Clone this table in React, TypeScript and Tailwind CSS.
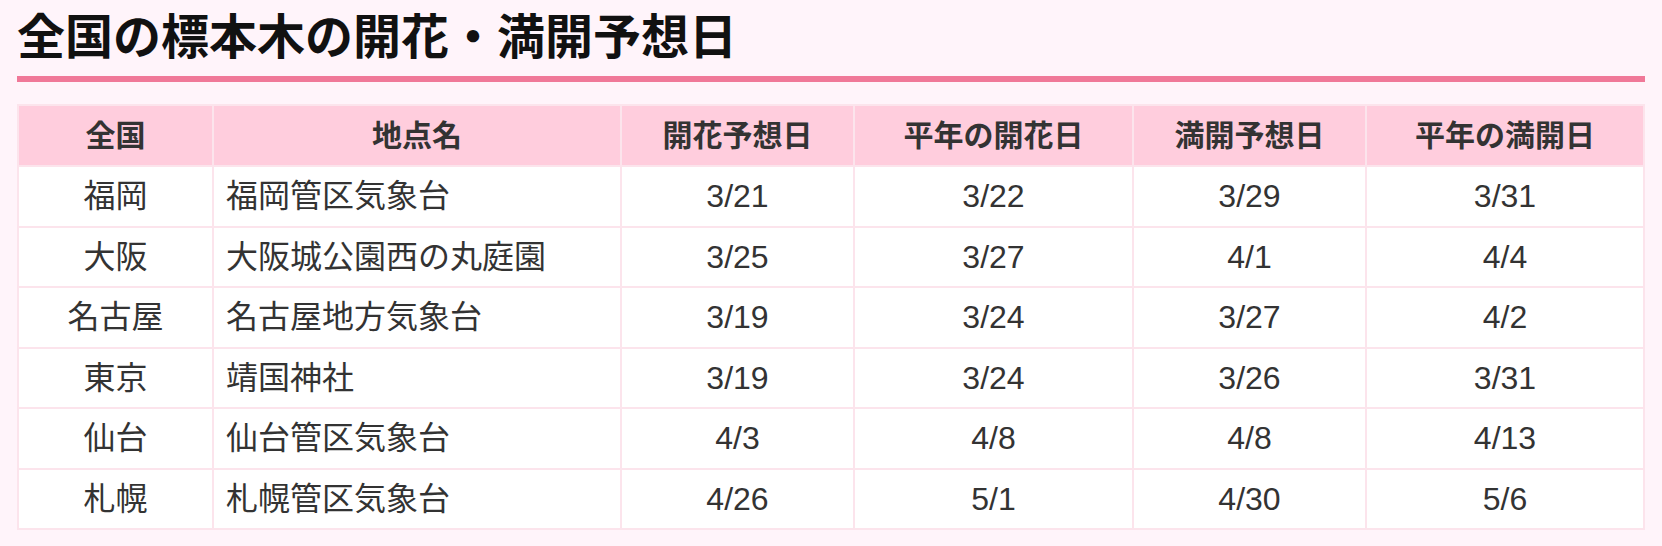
import React from 'react';

const rows = [
  { area: '福岡', place: '福岡管区気象台', bloom: '3/21', avgBloom: '3/22', full: '3/29', avgFull: '3/31' },
  { area: '大阪', place: '大阪城公園西の丸庭園', bloom: '3/25', avgBloom: '3/27', full: '4/1', avgFull: '4/4' },
  { area: '名古屋', place: '名古屋地方気象台', bloom: '3/19', avgBloom: '3/24', full: '3/27', avgFull: '4/2' },
  { area: '東京', place: '靖国神社', bloom: '3/19', avgBloom: '3/24', full: '3/26', avgFull: '3/31' },
  { area: '仙台', place: '仙台管区気象台', bloom: '4/3', avgBloom: '4/8', full: '4/8', avgFull: '4/13' },
  { area: '札幌', place: '札幌管区気象台', bloom: '4/26', avgBloom: '5/1', full: '4/30', avgFull: '5/6' },
];

export default function App() {
  return (
    <div
      className="min-h-[546px] bg-[#fff4fa] px-[17px] pt-[6px] pb-[18px]"
      style={{ fontFamily: '"Liberation Sans", "Noto Sans CJK JP", sans-serif' }}
    >
      <h2 className="border-b-[6px] border-[#f07898] pb-[6px] text-[48px] font-bold leading-[64px] text-[#111]">
        全国の標本木の開花・満開予想日
      </h2>

      <table className="mt-[22px] w-full table-fixed border-collapse border-2 border-[#fce4ec] text-[#333]">
        <colgroup>
          <col className="w-[195px]" />
          <col className="w-[408px]" />
          <col className="w-[233px]" />
          <col className="w-[279px]" />
          <col className="w-[233px]" />
          <col />
        </colgroup>
        <thead>
          <tr className="h-[61px] bg-[#ffcddd] text-[30px] font-bold">
            <th className="border-2 border-[#fce4ec] text-center">全国</th>
            <th className="border-2 border-[#fce4ec] text-center">地点名</th>
            <th className="border-2 border-[#fce4ec] text-center">開花予想日</th>
            <th className="border-2 border-[#fce4ec] text-center">平年の開花日</th>
            <th className="border-2 border-[#fce4ec] text-center">満開予想日</th>
            <th className="border-2 border-[#fce4ec] text-center">平年の満開日</th>
          </tr>
        </thead>
        <tbody className="bg-white text-[32px]">
          {rows.map((r) => (
            <tr key={r.area} className="h-[60.5px]">
              <td className="border-2 border-[#fce4ec] text-center">{r.area}</td>
              <td className="border-2 border-[#fce4ec] pl-[12px] text-left">{r.place}</td>
              <td className="border-2 border-[#fce4ec] text-center">{r.bloom}</td>
              <td className="border-2 border-[#fce4ec] text-center">{r.avgBloom}</td>
              <td className="border-2 border-[#fce4ec] text-center">{r.full}</td>
              <td className="border-2 border-[#fce4ec] text-center">{r.avgFull}</td>
            </tr>
          ))}
        </tbody>
      </table>
    </div>
  );
}
